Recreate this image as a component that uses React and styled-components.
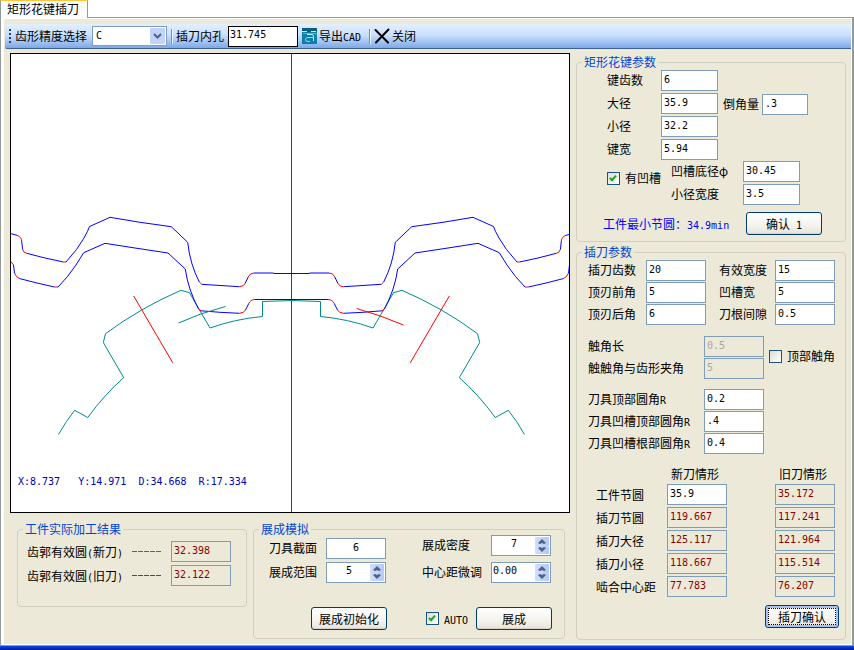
import React, { useId, useState } from 'react'
import styled, { createGlobalStyle } from 'styled-components'

const theme = {
  face: '#ece9d8',
  border: '#7f9db9',
  groupBorder: '#d0d0bf',
  legend: '#0046d5',
  frame: '#919b9c',
  navy: '#003c74',
  result: '#8b0000',
  blue: '#0000ff',
  teal: '#008b8b',
  text: '"Noto Sans CJK SC", sans-serif',
  mono: '"DejaVu Sans Mono", "Noto Sans CJK SC", monospace',
}

const GlobalStyle = createGlobalStyle`
  * { box-sizing: border-box; }

  body {
    margin: 0;
    background: ${theme.face};
    color: #000;
    font: 12px/16px ${theme.text};
  }

  input, select, button { font: inherit; color: inherit; margin: 0; }
`

// ---------------- window ----------------

const WindowStyled = styled.div`
  background: #fff;
`

const TabStrip = styled.div`
  display: flex;
  height: 17px;
`

const Tab = styled.button`
  position: relative;
  z-index: 1;
  height: 18px;
  padding: 0 8px 2px 6px;
  border: 1px solid ${theme.frame};
  border-top-color: #ffc73c;
  border-bottom: 0;
  background: #fcfcfe;
  line-height: 14px;
  white-space: nowrap;
`

const TabPage = styled.div`
  border: 1px solid ${theme.frame};
  border-right-width: 2px;
  padding: 1px 1px 1px 3px;
`

const Page = styled.div`
  padding-top: 5px;
  background: ${theme.face};
`

const BottomEdge = styled.div`
  height: 4px;
  background: linear-gradient(#0a4bea, #0038d8 40%, #00138c);
`

const Main = styled.main`
  display: flex;
  gap: 6px;
  padding: 4px 5px 4px 6px;
`

const LeftColumn = styled.div`
  flex: 1;
  min-width: 0;
`

const RightColumn = styled.div`
  display: flex;
  flex-direction: column;
  gap: 4px;
  width: 270px;
  padding-top: 3px;
`

// ---------------- toolbar ----------------

const Toolbar = styled.div`
  display: flex;
  align-items: center;
  height: 25px;
  margin-left: 1px;
  padding: 0 4px;
  border-bottom: 1px solid #3b619c;
  border-radius: 2px 0 0 2px;
  background: linear-gradient(#e3efff, #cbe0fd 45%, #b0cdf8 65%, #7fa8e3);
  white-space: nowrap;
`

const Grip = styled.span`
  width: 2px;
  height: 14px;
  margin-right: 4px;
  background: repeating-linear-gradient(#274176 0 2px, transparent 2px 4px);
`

const Separator = styled.span`
  width: 2px;
  height: 15px;
  margin: 0 3px;
  border-left: 1px solid #6a8ccb;
  border-right: 1px solid #f1f9ff;
`

const ToolButton = styled.button`
  display: flex;
  align-items: center;
  gap: 2px;
  margin-right: 5px;
  padding: 0;
  border: 0;
  background: none;
`

const SelectBox = styled.span`
  position: relative;
  width: 75px;
  margin: 0 1px 0 5px;

  select {
    appearance: none;
    display: block;
    width: 100%;
    height: 20px;
    padding: 0 3px;
    border: 1px solid ${theme.border};
    border-radius: 0;
    background: #fff;
    font: 10px/18px ${theme.mono};
  }

  svg {
    position: absolute;
    top: 2px;
    right: 2px;
    pointer-events: none;
  }
`

const BoreInput = styled.input`
  width: 70px;
  height: 21px;
  margin: 0 4px;
  padding: 0 0 4px 1px;
  border: 1px solid #000;
  background: #fff;
  font: 10px/14px ${theme.mono};
`

// ---------------- groups and fields ----------------

const Group = styled.fieldset`
  min-width: 0;
  margin: 0;
  padding: 0 5px;
  border: 1px solid ${theme.groupBorder};
  border-radius: 4px;

  legend {
    padding: 0 2px;
    color: ${theme.legend};
    line-height: 12px;
  }
`

const Mono = styled.span`
  font: 10px/10px ${theme.mono};
  white-space: pre;
`

const Row = styled.div`
  display: flex;
  align-items: flex-start;
  gap: ${props => props.$gap || 0}px;
`

const Stack = styled.div`
  display: flex;
  flex-direction: column;
  gap: ${props => props.$gap}px;
  padding-top: ${props => props.$top || 0}px;
`

const Label = styled.label`
  flex: none;
  width: ${props => props.$width}px;
  line-height: 20px;
  white-space: nowrap;
`

const TextInput = styled.input`
  display: block;
  width: ${props => props.$width || 60}px;
  height: 21px;
  padding: 0 2px 2px;
  border: 1px solid ${theme.border};
  border-radius: 0;
  background: #fff;
  text-align: ${props => props.$align || 'left'};
  font: 10px/17px ${theme.mono};

  &:read-only {
    background: ${theme.face};
    color: ${theme.result};
  }

  &:disabled {
    background: ${theme.face};
    color: #aca899;
  }
`

const SpinBox = styled.span`
  display: flex;
  width: 60px;
  height: 21px;
  padding: 1px;
  border: 1px solid ${theme.border};
  background: #fff;

  input {
    flex: 1;
    min-width: 0;
    padding: 0 0 3px;
    border: 0;
    background: none;
    text-align: ${props => props.$align || 'center'};
    font: 10px/14px ${theme.mono};
  }
`

const SpinButtons = styled.span`
  display: flex;
  flex-direction: column;
  width: 14px;

  button {
    display: flex;
    flex: 1;
    align-items: center;
    justify-content: center;
    min-height: 0;
    padding: 0;
    border: 0;
    border-radius: 1px;
    background: linear-gradient(90deg, #d2deff, #b4c8f6);
  }
`

const CheckLabel = styled.label`
  display: flex;
  align-items: center;
  gap: 5px;
  height: ${props => props.$height || 21}px;
  white-space: nowrap;

  input {
    appearance: none;
    position: relative;
    width: 13px;
    height: 13px;
    border: 1px solid #1c5180;
    background: linear-gradient(135deg, #dcdcd7, #fff);
  }

  input:checked::after {
    content: '';
    position: absolute;
    top: 1px;
    left: 3px;
    width: 2px;
    height: 5px;
    border: solid #21a121;
    border-width: 0 2px 2px 0;
    transform: rotate(42deg);
  }
`

const Button = styled.button`
  width: ${props => props.$width || 76}px;
  height: 23px;
  padding: 0;
  border: 1px solid ${theme.navy};
  border-radius: 3px;
  background: linear-gradient(#fff, #f4f3ee 60%, #e6e3da);
  box-shadow: inset 0 -1px 0 #d6d0c5;
  line-height: 19px;
  white-space: nowrap;

  &.default {
    outline: 1px dotted #000;
    outline-offset: -4px;
    box-shadow: inset 0 0 0 2px #a6c3f2, inset 0 -2px 0 #7b98e0;
  }
`

// Latin runs are set in the narrow face so that two of them fill one ideograph
function Text({ children }) {
  return children.split(/([\x20-\x7e]+)/).map((part, i) =>
    i % 2 ? <Mono key={i}>{part}</Mono> : part
  )
}

function Field({ label, labelWidth, value, ...rest }) {
  const id = useId()
  return (
    <Row>
      <Label htmlFor={id} $width={labelWidth}><Text>{label}</Text></Label>
      <TextInput id={id} type="text" defaultValue={value} {...rest} />
    </Row>
  )
}

function SpinField({ label, labelWidth, value, step = 1, digits = 0, align }) {
  const id = useId()
  const [current, setCurrent] = useState(value)
  const move = (delta) => setCurrent((Number(current) + delta).toFixed(digits))

  return (
    <Row>
      <Label htmlFor={id} $width={labelWidth}>{label}</Label>
      <SpinBox $align={align}>
        <input id={id} type="text" value={current} onChange={(e) => setCurrent(e.target.value)} />
        <SpinButtons>
          <button type="button" aria-label={label + ' +'} onClick={() => move(step)}>
            <svg width="8" height="5" viewBox="0 0 8 5"><path d="M4 0L8 4L6 5L4 4L2 5L0 4Z" fill="#4d6185" /></svg>
          </button>
          <button type="button" aria-label={label + ' -'} onClick={() => move(-step)}>
            <svg width="8" height="5" viewBox="0 0 8 5"><path d="M4 5L8 1L6 0L4 1L2 0L0 1Z" fill="#4d6185" /></svg>
          </button>
        </SpinButtons>
      </SpinBox>
    </Row>
  )
}

function Check({ label, checked, height }) {
  return (
    <CheckLabel $height={height}>
      <input type="checkbox" defaultChecked={checked} />
      <span><Text>{label}</Text></span>
    </CheckLabel>
  )
}

// ---------------- plot ----------------

const PlotStyled = styled.div`
  position: relative;
  height: 460px;
  margin-bottom: 10px;
  border: 1px solid #000;
  background: #fff;

  svg {
    display: block;
    width: 100%;
    height: 100%;
    fill: none;
  }

  output {
    position: absolute;
    left: 7px;
    bottom: 24px;
    color: #0000b4;
  }
`

const BLUE_PATHS = [
  'M11 233.7L17 235.3',
  'M21.7 241L22.5 249',
  'M26.7 253.3L45 258L63.5 262',
  'M66 262Q78 249 84 238Q88 231 89.5 226.5L110 217.3L140 222.3L171.3 226.7L187.7 242.3Q190 264 199.3 282',
  'M201.7 284.3L239.3 286.7',
  'M245 283.5L248.5 276.5',
  'M254 273L273 273L274 273.5L292 273.5',
  'M13.5 265L14.5 273',
  'M20 278.7L37 283L54.5 287',
  'M58 287Q68 277 76 265L83.7 252.7L105 243.3L135 248L168 253L185.3 269Q188 289 198.5 309',
  'M201 310.8L220 312.3L239.5 313.3',
  'M245.5 310L248.5 304',
  'M255 299.5L292 299.5',
]

const RED_PATHS = [
  'M17 235.3Q21.5 237 21.7 241',
  'M22.5 249Q23.5 253 26.7 253.3',
  'M63.5 262L66 262',
  'M199.3 282L201.7 284.3',
  'M239.3 286.7Q243.5 286.7 245 283.5',
  'M248.5 276.5Q250 273 254 273',
  'M11 261.5L13.5 265',
  'M14.5 273Q16 277.5 20 278.7',
  'M54.5 287L58 287',
  'M198.5 309L201 310.8',
  'M239.5 313.3Q244 313 245.5 310',
  'M248.5 304Q250.5 299.5 255 299.5',
  'M133.7 296L172.7 362.7',
]

const CUTTER_PATH =
  'M58.5 434.5Q66 421 74.7 410.3L87.7 417.5Q105 394 123.7 377.7L103.3 342.5L105.5 333.7' +
  'Q140 308 181 290.3L189.5 292.7L210 328Q235 319 262.5 316.5L262.5 301.5L292 300.5'

function HalfProfile() {
  return (
    <>
      <path d={CUTTER_PATH} stroke={theme.teal} />
      {BLUE_PATHS.map(d => <path key={d} d={d} stroke={theme.blue} />)}
      {RED_PATHS.map(d => <path key={d} d={d} stroke="#ff0000" />)}
    </>
  )
}

function Plot() {
  return (
    <PlotStyled>
      <svg viewBox="11 54 558 458" preserveAspectRatio="xMidYMid meet">
        <path d="M291.5 54V512" stroke="#e00000" shapeRendering="crispEdges" />
        <HalfProfile />
        <g transform="translate(583 0) scale(-1 1)"><HalfProfile /></g>
        <path d="M178.5 323Q200 313 225.5 306.5" stroke={theme.teal} />
        <path d="M356.7 308.5Q380 315 403.5 325" stroke="#ff0000" />
      </svg>
      <output><Mono>X:8.737   Y:14.971  D:34.668  R:17.334</Mono></output>
    </PlotStyled>
  )
}

// ---------------- groups on the page ----------------

const BottomGroups = styled.div`
  display: flex;
  align-items: flex-start;
  gap: 6px;
  padding: 0 5px 0 7px;
`

const ResultGroup = styled(Group)`
  flex: 1 1 230px;
  padding-bottom: 20px;
`

const ResultBody = styled.div`
  padding: 6px 0 0 4px;
`

const ResultRow = styled.div`
  display: grid;
  grid-template-columns: 105px 39px 60px;
  align-items: center;
  height: 21px;
  margin-bottom: 3px;

  &:last-child { margin-bottom: 0; }
`

const Dashes = styled.span`
  width: 29px;
  height: 1px;
  background: repeating-linear-gradient(90deg, ${props => props.$color} 0 5px, transparent 5px 6px);
`

const SimulationGroup = styled(Group)`
  flex: 1 1 312px;
  padding-bottom: 8px;
`

const SimulationBody = styled.div`
  padding-left: 10px;
`

const SimulationActions = styled.div`
  display: flex;
  align-items: center;
  padding: 24px 0 0 42px;

  label { margin: 0 8px 0 39px; }
`

const SplineGroup = styled(Group)`
  padding-bottom: 6px;
`

const SplineBody = styled.div`
  padding: 2px 0 0 25px;
`

const MinCircle = styled.div`
  display: flex;
  align-items: center;
  justify-content: space-between;
  padding: 7px 18px 0 21px;
  color: ${theme.blue};

  button { color: #000; }
`

const CutterGroup = styled(Group)`
  padding-bottom: 11px;
`

const CutterBody = styled.div`
  display: flex;
  flex-direction: column;
  gap: 10px;
  padding: 2px 0 0 6px;
`

const CutterActions = styled.div`
  display: flex;
  justify-content: flex-end;
  padding: 6px 1px 0 0;
`

const CaseTable = styled.table`
  align-self: flex-start;
  margin-left: 8px;
  border-spacing: 0;

  th, td {
    padding: 0 0 2px;
    font-weight: normal;
    text-align: left;
    white-space: nowrap;
  }

  thead th, thead td { padding: 0 0 0 4px; line-height: 20px; }
  tbody th { width: 71px; line-height: 18px; }
  .gap { width: 48px; }
`

const CASES = [
  ['工件节圆', '35.9', '35.172'],
  ['插刀节圆', '119.667', '117.241'],
  ['插刀大径', '125.117', '121.964'],
  ['插刀小径', '118.667', '115.514'],
  ['啮合中心距', '77.783', '76.207'],
]

function ResultLine({ label, color, value }) {
  const id = useId()
  return (
    <ResultRow>
      <Label htmlFor={id}><Text>{label}</Text></Label>
      <Dashes $color={color} />
      <TextInput id={id} type="text" readOnly value={value} />
    </ResultRow>
  )
}

function SplineParameters() {
  return (
    <SplineGroup>
      <legend>矩形花键参数</legend>
      <SplineBody>
        <Row $gap={5}>
          <Stack $gap={2}>
            <Field label="键齿数" labelWidth={54} value="6" $width={57} />
            <Field label="大径" labelWidth={54} value="35.9" $width={57} />
            <Field label="小径" labelWidth={54} value="32.2" $width={57} />
            <Field label="键宽" labelWidth={54} value="5.94" $width={57} />
          </Stack>
          <Stack $gap={2} $top={24}>
            <Field label="倒角量" labelWidth={39} value=".3" $width={46} />
          </Stack>
        </Row>
        <Row $gap={10}>
          <Check label="有凹槽" height={36} checked />
          <Stack $gap={2} $top={1}>
            <Field label="凹槽底径φ" labelWidth={72} value="30.45" $width={57} />
            <Field label="小径宽度" labelWidth={72} value="3.5" $width={57} />
          </Stack>
        </Row>
      </SplineBody>
      <MinCircle>
        <span><Text>工件最小节圆：34.9min</Text></span>
        <Button type="button"><Text>确认 1</Text></Button>
      </MinCircle>
    </SplineGroup>
  )
}

function CutterParameters() {
  return (
    <CutterGroup>
      <legend>插刀参数</legend>
      <CutterBody>
        <Row $gap={13}>
          <Stack $gap={1}>
            <Field label="插刀齿数" labelWidth={58} value="20" />
            <Field label="顶刃前角" labelWidth={58} value="5" />
            <Field label="顶刃后角" labelWidth={58} value="6" />
          </Stack>
          <Stack $gap={1}>
            <Field label="有效宽度" labelWidth={56} value="15" />
            <Field label="凹槽宽" labelWidth={56} value="5" />
            <Field label="刀根间隙" labelWidth={56} value="0.5" />
          </Stack>
        </Row>
        <Row $gap={5}>
          <Stack $gap={1} $top={1}>
            <Field label="触角长" labelWidth={116} value="0.5" disabled />
            <Field label="触触角与齿形夹角" labelWidth={116} value="5" disabled />
          </Stack>
          <Check label="顶部触角" height={42} />
        </Row>
        <Stack $gap={1}>
          <Field label="刀具顶部圆角R" labelWidth={116} value="0.2" />
          <Field label="刀具凹槽顶部圆角R" labelWidth={116} value=".4" />
          <Field label="刀具凹槽根部圆角R" labelWidth={116} value="0.4" />
        </Stack>
        <CaseTable>
          <thead>
            <tr>
              <td />
              <th scope="col">新刀情形</th>
              <td className="gap" />
              <th scope="col">旧刀情形</th>
            </tr>
          </thead>
          <tbody>
            {CASES.map(([name, fresh, worn], i) => (
              <tr key={name}>
                <th scope="row">{name}</th>
                <td><TextInput type="text" aria-label={'新刀 ' + name} defaultValue={fresh} readOnly={i > 0} /></td>
                <td />
                <td><TextInput type="text" aria-label={'旧刀 ' + name} defaultValue={worn} readOnly /></td>
              </tr>
            ))}
          </tbody>
        </CaseTable>
      </CutterBody>
      <CutterActions>
        <Button type="button" className="default" $width={74}>插刀确认</Button>
      </CutterActions>
    </CutterGroup>
  )
}

function App() {
  return (
    <WindowStyled>
      <GlobalStyle />
      <TabStrip role="tablist">
        <Tab type="button" role="tab" aria-selected="true">矩形花键插刀</Tab>
      </TabStrip>
      <TabPage>
        <Page>
          <Toolbar>
            <Grip />
            <label htmlFor="precision">齿形精度选择</label>
            <SelectBox>
              <select id="precision" defaultValue="C">
                <option>A</option>
                <option>B</option>
                <option>C</option>
                <option>D</option>
              </select>
              <svg width="15" height="16" viewBox="0 0 15 16">
                <rect width="15" height="16" rx="1" fill="#c1d3fb" />
                <path d="M4 6L7.5 9.5L11 6" fill="none" stroke="#4d6185" strokeWidth="2" />
              </svg>
            </SelectBox>
            <Separator />
            <label htmlFor="bore">插刀内孔</label>
            <BoreInput id="bore" type="text" defaultValue="31.745" />
            <ToolButton type="button">
              <svg width="15" height="16" viewBox="0 0 15 16" fill="none">
                <rect width="15" height="16" fill="#0b7fa6" />
                <rect width="15" height="4" fill="#07607f" />
                <path d="M0 3.5H5M9 3.5H14" stroke="#bfeaf5" />
                <path d="M5 6.5H10Q11.5 6.5 11.5 8.5V13" stroke="#c8f0fa" />
                <path d="M11 9.5H6Q3.5 9.5 3.5 11.5Q3.5 13.5 6 13.5H8" stroke="#8fdcf0" />
                <path d="M1 5.5H14V7" stroke="#46bbdc" />
              </svg>
              <span><Text>导出CAD</Text></span>
            </ToolButton>
            <Separator />
            <ToolButton type="button">
              <svg width="16" height="16" viewBox="0 0 16 16" fill="none">
                <path d="M1.5 2L14 14.5M14.5 1.5L2 14.5" stroke="#000" strokeWidth="2" strokeLinecap="round" />
              </svg>
              关闭
            </ToolButton>
          </Toolbar>
          <Main>
            <LeftColumn>
              <Plot />
              <BottomGroups>
                <ResultGroup>
                  <legend>工件实际加工结果</legend>
                  <ResultBody>
                    <ResultLine label="齿郭有效圆(新刀)" color={theme.teal} value="32.398" />
                    <ResultLine label="齿郭有效圆(旧刀)" color="#ff0000" value="32.122" />
                  </ResultBody>
                </ResultGroup>
                <SimulationGroup>
                  <legend>展成模拟</legend>
                  <SimulationBody>
                    <Row $gap={36}>
                      <Stack $gap={3} $top={3}>
                        <Field label="刀具截面" labelWidth={57} value="6" $align="center" />
                        <SpinField label="展成范围" labelWidth={57} value="5" />
                      </Stack>
                      <Stack $gap={6}>
                        <SpinField label="展成密度" labelWidth={69} value="7" />
                        <SpinField label="中心距微调" labelWidth={69} value="0.00" step={0.01} digits={2} align="left" />
                      </Stack>
                    </Row>
                    <SimulationActions>
                      <Button type="button">展成初始化</Button>
                      <Check label="AUTO" checked />
                      <Button type="button">展成</Button>
                    </SimulationActions>
                  </SimulationBody>
                </SimulationGroup>
              </BottomGroups>
            </LeftColumn>
            <RightColumn>
              <SplineParameters />
              <CutterParameters />
            </RightColumn>
          </Main>
        </Page>
      </TabPage>
      <BottomEdge />
    </WindowStyled>
  )
}

export default App
